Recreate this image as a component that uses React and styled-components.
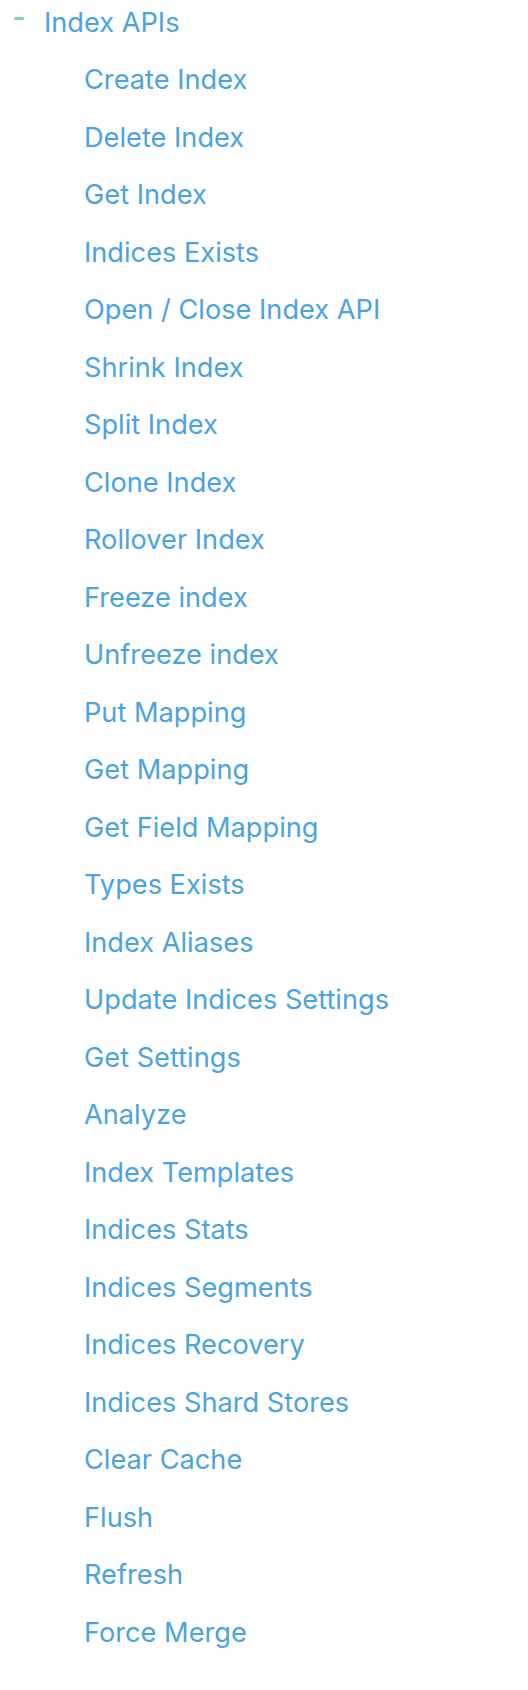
import React from "react";
import styled, { createGlobalStyle } from "styled-components";

const Global = createGlobalStyle`
  html, body { margin: 0; padding: 0; background: #ffffff; }
  body { font-family: Inter, "Noto Sans", sans-serif; }
`;

const Nav = styled.nav`
  width: 528px;
  font-family: Inter, "Noto Sans", sans-serif;
  font-size: 27.2px;
  color: #4aa3df;
`;

const Header = styled.div`
  display: flex;
  align-items: center;
  height: 46px;
  line-height: 46px;
  padding-left: 14px;
`;

const Toggle = styled.span`
  display: block;
  width: 10px;
  height: 3px;
  border-radius: 1.5px;
  background: #7fcfc0;
  margin-bottom: 9px;
  margin-right: 20px;
`;

const Title = styled.span`
  white-space: nowrap;
`;

const List = styled.ul`
  list-style: none;
  margin: 0;
  padding: 5px 0 0 84px;
`;

const Item = styled.li`
  height: 57.5px;
  line-height: 57.5px;
  white-space: nowrap;
`;

const items = [
  "Create Index",
  "Delete Index",
  "Get Index",
  "Indices Exists",
  "Open / Close Index API",
  "Shrink Index",
  "Split Index",
  "Clone Index",
  "Rollover Index",
  "Freeze index",
  "Unfreeze index",
  "Put Mapping",
  "Get Mapping",
  "Get Field Mapping",
  "Types Exists",
  "Index Aliases",
  "Update Indices Settings",
  "Get Settings",
  "Analyze",
  "Index Templates",
  "Indices Stats",
  "Indices Segments",
  "Indices Recovery",
  "Indices Shard Stores",
  "Clear Cache",
  "Flush",
  "Refresh",
  "Force Merge",
];

export default function App() {
  return (
    <>
      <Global />
      <Nav>
        <Header>
          <Toggle />
          <Title>Index APIs</Title>
        </Header>
        <List>
          {items.map((t) => (
            <Item key={t}>{t}</Item>
          ))}
        </List>
      </Nav>
    </>
  );
}
